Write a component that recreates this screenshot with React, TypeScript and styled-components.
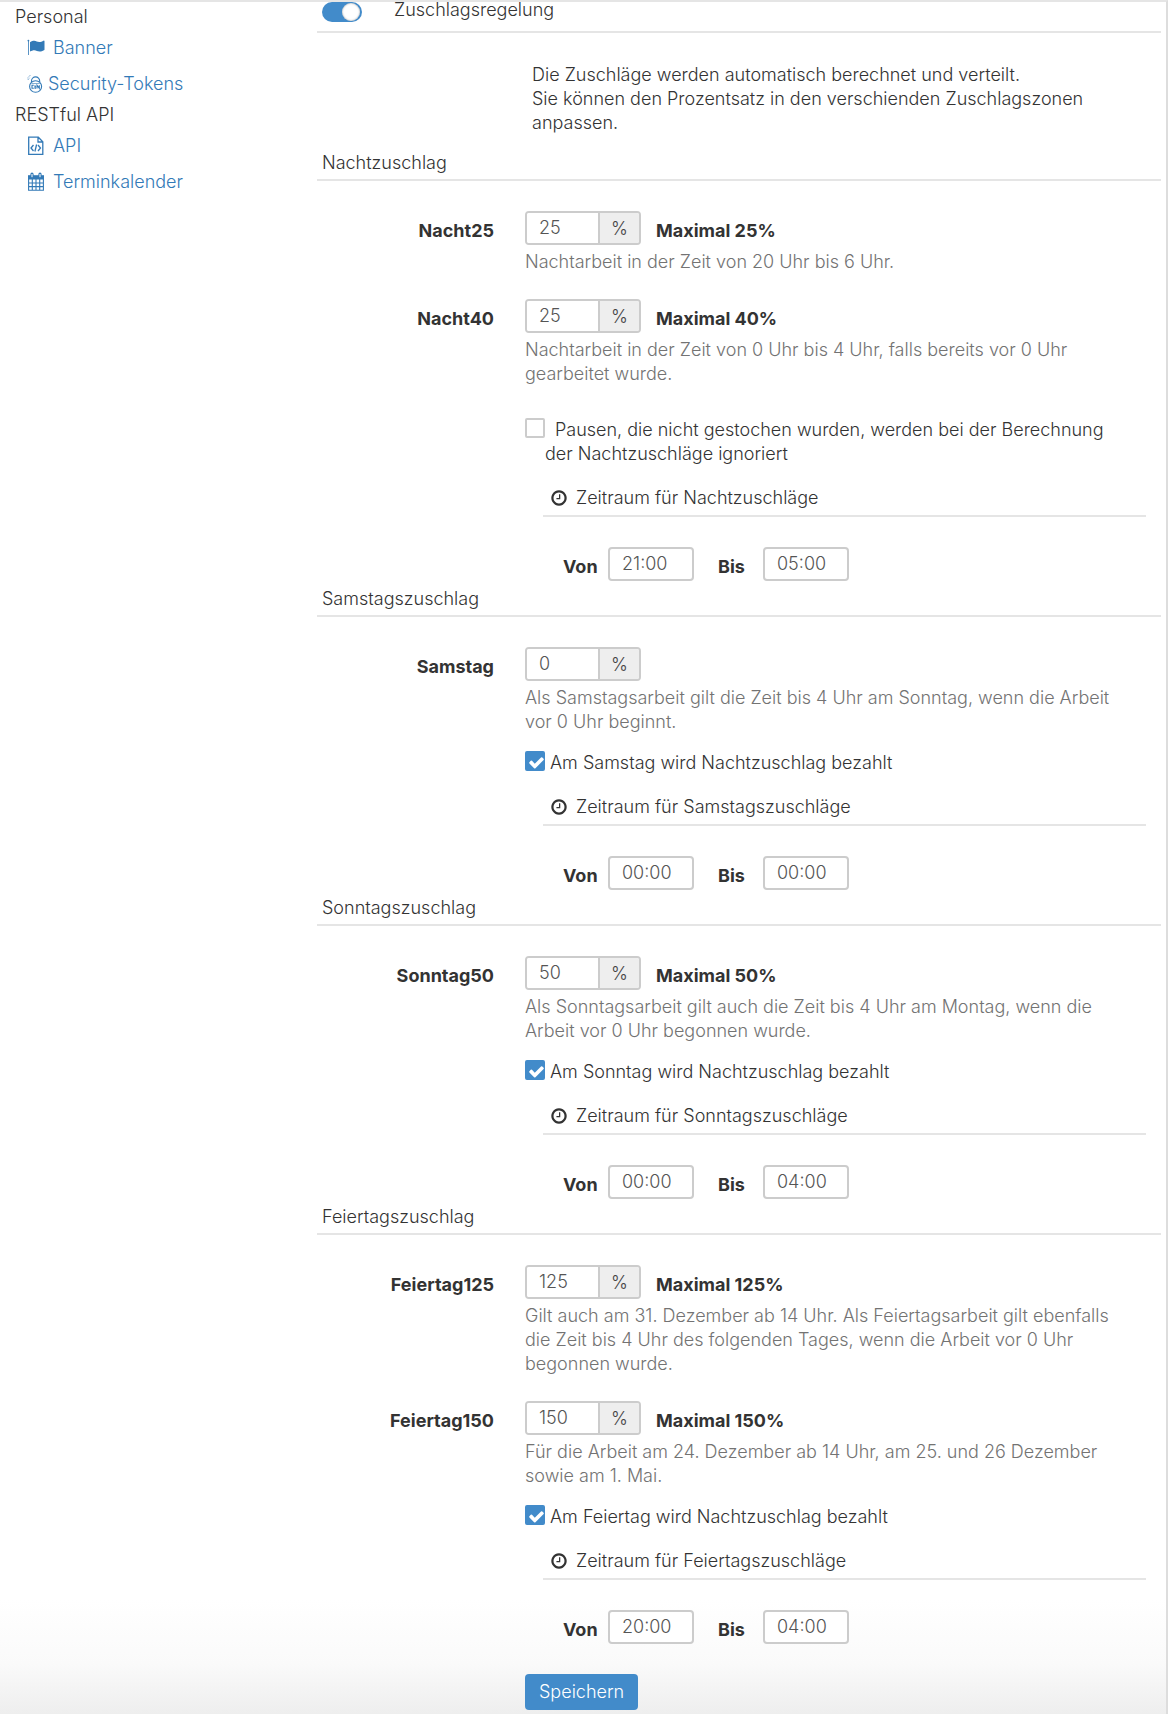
import React from 'react';
import styled, { createGlobalStyle } from 'styled-components';

const GlobalStyle = createGlobalStyle`
  *, *::before, *::after { box-sizing: border-box; }
  body {
    margin: 0;
    background: #fff;
    color: #333;
    font-family: Inter, "Noto Sans", sans-serif;
    font-size: 18px;
    font-weight: 300;
    line-height: 24px;
  }
`;

const Page = styled.div`
  display: flex;
  min-height: 100vh;
  border-top: 2px solid #e5e5e5;
  border-right: 2px solid #ddd;
  background: linear-gradient(to top, #eee, #fafafa 50px, #fff 114px);
`;

const Sidebar = styled.nav`
  flex: 0 0 317px;
  padding: 2px 15px;
`;

const NavHeading = styled.h2`
  margin: 0;
  font-size: 18px;
  font-weight: 300;
  line-height: 26px;
`;

const NavList = styled.ul`
  margin: 0;
  padding: 0 0 0 12px;
  list-style: none;
`;

const NavLink = styled.a<{ $gap: number }>`
  display: flex;
  align-items: center;
  gap: ${(p) => p.$gap}px;
  height: 36px;
  color: #337ab7;
  text-decoration: none;
`;

const Main = styled.main`
  flex: 1;
  min-width: 0;
  padding: 0 5px 4px 0;
`;

const ToggleRow = styled.label`
  display: flex;
  align-items: flex-start;
  gap: 32px;
  height: 31px;
  padding-left: 5px;
  border-bottom: 2px solid #e5e5e5;
  line-height: 16px;
`;

const Toggle = styled.input`
  appearance: none;
  display: flex;
  justify-content: flex-end;
  width: 40px;
  height: 20px;
  margin: 0;
  padding: 1px 2px;
  border-radius: 10px;
  background: #428bca;
  &::before {
    content: '';
    width: 18px;
    height: 18px;
    border-radius: 50%;
    background: #fff;
    box-shadow: inset 0 0 2px #999;
  }
`;

const Info = styled.p`
  margin: 30px 15px 16px 215px;
  max-width: 600px;
`;

const SectionTitle = styled.h3`
  margin: 0 0 30px;
  padding: 0 5px 4px;
  border-bottom: 2px solid #e5e5e5;
  font-size: 18px;
  font-weight: 300;
`;

const Fields = styled.div`
  margin: 0 15px 6px 208px;
`;

const Group = styled.div<{ $after: number }>`
  margin-bottom: ${(p) => p.$after}px;
`;

const FieldRow = styled.div`
  display: flex;
  height: 34px;
  margin-left: -208px;
`;

const FieldLabel = styled.label`
  width: 177px;
  margin-right: 31px;
  padding-top: 8px;
  font-weight: 700;
  text-align: right;
`;

const InputGroup = styled.div`
  display: flex;
  width: 116px;
  border: 2px solid #ccc;
  border-radius: 4px;
  background: #fff;
  overflow: hidden;
`;

const PercentInput = styled.input`
  width: 71px;
  padding: 0 12px;
  border: 0;
  background: #fff;
  color: #555;
  font: inherit;
`;

const Addon = styled.span`
  flex: 1;
  border-left: 2px solid #ccc;
  background: #eee;
  color: #444;
  line-height: 32px;
  text-align: center;
`;

const Maximum = styled.strong`
  padding: 8px 0 0 15px;
  font-weight: 700;
`;

const Help = styled.p`
  margin: 5px 0 0;
  padding-right: 20px;
  color: #737373;
`;

const CheckLabel = styled.label<{ $hanging?: boolean }>`
  display: flex;
  gap: ${(p) => (p.$hanging ? 0 : 5)}px;
  padding-right: 20px;
`;

const CheckText = styled.span<{ $hanging?: boolean }>`
  flex: 1;
  text-indent: ${(p) => (p.$hanging ? 10 : 0)}px;
`;

const CheckBox = styled.span`
  position: relative;
  display: block;
  width: 20px;
  height: 20px;
  svg {
    position: absolute;
    inset: 3px 0 0 3px;
    pointer-events: none;
  }
`;

const CheckInput = styled.input`
  appearance: none;
  display: block;
  width: 20px;
  height: 20px;
  margin: 0;
  border: 2px solid #ccc;
  border-radius: 2px;
  background: #fff;
  &:checked {
    border-color: #428bca;
    background: #428bca;
  }
`;

const PeriodTitle = styled.h4`
  display: flex;
  align-items: center;
  gap: 8px;
  margin: 20px 0 30px 18px;
  padding: 0 7px 5px;
  border-bottom: 2px solid #e5e5e5;
  font-size: 18px;
  font-weight: 300;
`;

const TimeRow = styled.div`
  display: flex;
  gap: 24px;
  padding-left: 38px;
`;

const TimeLabel = styled.label`
  display: flex;
  height: 34px;
  font-weight: 700;
  line-height: 40px;
`;

const TimeCaption = styled.span`
  min-width: 45px;
`;

const TimeInput = styled.input`
  width: 86px;
  height: 34px;
  padding: 0 12px;
  border: 2px solid #ccc;
  border-radius: 4px;
  background: #fff;
  color: #555;
  font: inherit;
  font-weight: 300;
`;

const SaveButton = styled.button`
  height: 36px;
  margin: 24px 0 0 208px;
  padding: 0 14px;
  border: 0;
  border-radius: 4px;
  background: #428bca;
  color: #fff;
  font: inherit;
`;

const FlagIcon = () => (
  <svg width="18" height="18" viewBox="0 0 18 18" fill="currentColor" aria-hidden="true">
    <path d="M.5 1.600a.9.9 0 1 1 1.300.8V16H1V2.400a.9.9 0 0 1-.5-.8zM3 3.200C4.600 2.200 6 1.800 7.200 1.800c2 0 3.200 1.300 5 1.300 1.500 0 3-.7 4.300-1.400.5-.2 1 0 1 .5v8.200c0 .4-.2.600-.6.800-1.300.700-2.800 1.300-4.300 1.300-2.200 0-3.300-1.300-5.300-1.300-1.500 0-2.800.6-4.300 1.400z" />
  </svg>
);

const TokenIcon = () => (
  <svg width="16" height="20" viewBox="0 0 16 20" fill="none" stroke="currentColor" aria-hidden="true">
    <ellipse cx="8.600" cy="12.500" rx="6" ry="5.700" strokeWidth="1.100" />
    <path d="M4.500 8V7a4.100 4.100 0 0 1 8.200 0v1" strokeWidth="1.100" />
    <path d="M4.400 9.500h8.400" strokeWidth=".6" />
    <path d="M6.800 11.200H5v3h1.800M8 11.200v3h1M8 12.700h1M10 14.400v-3.200l2.300 3.200v-3.200" strokeWidth="1.100" />
    <path d="M0 4.500 3.500 1M.8 6 2.600 3.800" strokeWidth=".7" strokeDasharray="1.200 .6" />
  </svg>
);

const CodeFileIcon = () => (
  <svg width="18" height="20" viewBox="0 0 18 20" fill="none" stroke="currentColor" strokeWidth="1.300" aria-hidden="true">
    <path d="M1.700 1.200h9.600l4.500 4.500v12.600H1.700zM11 1.200v4.800h4.800M6.500 9 4 12l2.500 3M11 9l2.500 3L11 15M9.600 8.500l-1.700 7" />
  </svg>
);

const CalendarIcon = () => (
  <svg width="18" height="20" viewBox="0 0 18 20" fill="none" stroke="currentColor" aria-hidden="true">
    <path d="M1.600 7v11.300h14.800V7M5.300 7v11M9 7v11M12.700 7v11M1.600 11h14.800M1.600 14.600h14.800" strokeWidth="1.100" />
    <path d="M1 3.200h16v4.300H1z" fill="currentColor" stroke="none" />
    <path d="M5 2.200v3M13 2.200v3" strokeWidth="3.200" strokeLinecap="round" />
    <path d="M5 2v3.200M13 2v3.200" stroke="#fff" strokeWidth="1" />
  </svg>
);

const ClockIcon = () => (
  <svg width="18" height="18" viewBox="0 0 1792 1792" fill="currentColor" aria-hidden="true">
    <path d="M1024 544v448q0 14-9 23t-23 9h-320q-14 0-23-9t-9-23v-64q0-14 9-23t23-9h224v-352q0-14 9-23t23-9h64q14 0 23 9t9 23zm416 352q0-148-73-273t-198-198-273-73-273 73-198 198-73 273 73 273 198 198 273 73 273-73 198-198 73-273zm224 0q0 209-103 385.5t-279.5 279.5-385.5 103-385.5-103-279.5-279.5-103-385.5 103-385.5 279.5-279.5 385.5-103 385.5 103 279.5 279.5 103 385.5z" />
  </svg>
);

const CheckIcon = () => (
  <svg width="17" height="17" viewBox="0 0 1792 1792" fill="#fff" aria-hidden="true">
    <path d="M1671 566q0 40-28 68l-724 724-136 136q-28 28-68 28t-68-28l-136-136-362-362q-28-28-28-68t28-68l136-136q28-28 68-28t68 28l294 295 656-657q28-28 68-28t68 28l136 136q28 28 28 68z" />
  </svg>
);

type Surcharge = { name: string; value: string; max?: string; help: string };
type Section = {
  title: string;
  surcharges: Surcharge[];
  option: string;
  checked: boolean;
  from: string;
  to: string;
};

const sections: Section[] = [
  {
    title: 'Nachtzuschlag',
    surcharges: [
      { name: 'Nacht25', value: '25', max: '25%', help: 'Nachtarbeit in der Zeit von 20 Uhr bis 6 Uhr.' },
      { name: 'Nacht40', value: '25', max: '40%', help: 'Nachtarbeit in der Zeit von 0 Uhr bis 4 Uhr, falls bereits vor 0 Uhr gearbeitet wurde.' },
    ],
    option: 'Pausen, die nicht gestochen wurden, werden bei der Berechnung der Nachtzuschläge ignoriert',
    checked: false,
    from: '21:00',
    to: '05:00',
  },
  {
    title: 'Samstagszuschlag',
    surcharges: [
      { name: 'Samstag', value: '0', help: 'Als Samstagsarbeit gilt die Zeit bis 4 Uhr am Sonntag, wenn die Arbeit vor 0 Uhr beginnt.' },
    ],
    option: 'Am Samstag wird Nachtzuschlag bezahlt',
    checked: true,
    from: '00:00',
    to: '00:00',
  },
  {
    title: 'Sonntagszuschlag',
    surcharges: [
      { name: 'Sonntag50', value: '50', max: '50%', help: 'Als Sonntagsarbeit gilt auch die Zeit bis 4 Uhr am Montag, wenn die Arbeit vor 0 Uhr begonnen wurde.' },
    ],
    option: 'Am Sonntag wird Nachtzuschlag bezahlt',
    checked: true,
    from: '00:00',
    to: '04:00',
  },
  {
    title: 'Feiertagszuschlag',
    surcharges: [
      { name: 'Feiertag125', value: '125', max: '125%', help: 'Gilt auch am 31. Dezember ab 14 Uhr. Als Feiertagsarbeit gilt ebenfalls die Zeit bis 4 Uhr des folgenden Tages, wenn die Arbeit vor 0 Uhr begonnen wurde.' },
      { name: 'Feiertag150', value: '150', max: '150%', help: 'Für die Arbeit am 24. Dezember ab 14 Uhr, am 25. und 26 Dezember sowie am 1. Mai.' },
    ],
    option: 'Am Feiertag wird Nachtzuschlag bezahlt',
    checked: true,
    from: '20:00',
    to: '04:00',
  },
];

function SurchargeSection({ section }: { section: Section }) {
  const [checked, setChecked] = React.useState(section.checked);
  const last = section.surcharges.length - 1;
  const hanging = !section.checked;
  return (
    <section>
      <SectionTitle>{section.title}</SectionTitle>
      <Fields>
        {section.surcharges.map((s, i) => (
          <Group key={s.name} $after={i < last ? 25 : hanging ? 32 : 17}>
            <FieldRow>
              <FieldLabel htmlFor={s.name}>{s.name}</FieldLabel>
              <InputGroup>
                <PercentInput id={s.name} defaultValue={s.value} />
                <Addon>%</Addon>
              </InputGroup>
              {s.max && <Maximum>Maximal {s.max}</Maximum>}
            </FieldRow>
            <Help>{s.help}</Help>
          </Group>
        ))}
        <CheckLabel $hanging={hanging}>
          <CheckBox>
            <CheckInput
              type="checkbox"
              checked={checked}
              onChange={(e) => setChecked(e.target.checked)}
            />
            {checked && <CheckIcon />}
          </CheckBox>
          <CheckText $hanging={hanging}>{section.option}</CheckText>
        </CheckLabel>
        <PeriodTitle>
          <ClockIcon />
          Zeitraum für {section.title.replace('zuschlag', 'zuschläge')}
        </PeriodTitle>
        <TimeRow>
          <TimeLabel>
            <TimeCaption>Von</TimeCaption>
            <TimeInput defaultValue={section.from} />
          </TimeLabel>
          <TimeLabel>
            <TimeCaption>Bis</TimeCaption>
            <TimeInput defaultValue={section.to} />
          </TimeLabel>
        </TimeRow>
      </Fields>
    </section>
  );
}

export default function App() {
  return (
    <>
      <GlobalStyle />
      <Page>
        <Sidebar>
          <NavHeading>Personal</NavHeading>
          <NavList>
            <li><NavLink href="#banner" $gap={8}><FlagIcon />Banner</NavLink></li>
            <li><NavLink href="#tokens" $gap={5}><TokenIcon />Security-Tokens</NavLink></li>
          </NavList>
          <NavHeading>RESTful API</NavHeading>
          <NavList>
            <li><NavLink href="#api" $gap={8}><CodeFileIcon />API</NavLink></li>
            <li><NavLink href="#calendar" $gap={8}><CalendarIcon />Terminkalender</NavLink></li>
          </NavList>
        </Sidebar>
        <Main>
          <ToggleRow>
            <Toggle type="checkbox" role="switch" defaultChecked />
            Zuschlagsregelung
          </ToggleRow>
          <Info>
            Die Zuschläge werden automatisch berechnet und verteilt.
            <br />
            Sie können den Prozentsatz in den verschienden Zuschlagszonen anpassen.
          </Info>
          {sections.map((s) => (
            <SurchargeSection key={s.title} section={s} />
          ))}
          <SaveButton type="button">Speichern</SaveButton>
        </Main>
      </Page>
    </>
  );
}
